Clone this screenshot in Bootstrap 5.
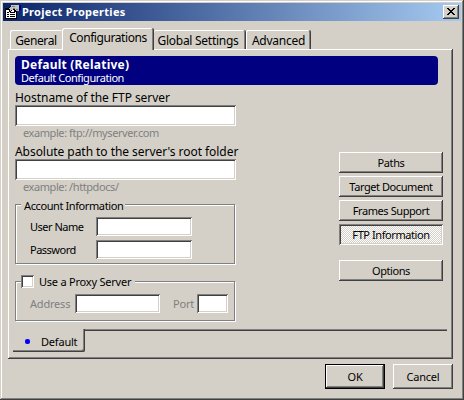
<!DOCTYPE html>
<html lang="en">
<head>
<meta charset="utf-8">
<meta name="viewport" content="width=device-width, initial-scale=1">
<title>Project Properties</title>
<link rel="stylesheet" href="https://cdn.jsdelivr.net/npm/bootstrap@5.3.0/dist/css/bootstrap.min.css">
<style>
:root{--face:#d4d0c8;--shade:#808080;--dark:#404040}
body{margin:0;background:var(--face);font:11px/14px "Noto Sans",sans-serif;letter-spacing:-.2px;color:#000;overflow:hidden}
button{letter-spacing:inherit}
.dialog{width:464px;height:400px;padding:3px 3px 0;background:var(--face);white-space:nowrap;
 box-shadow:inset -1px -1px var(--dark),inset 1px 1px var(--face),inset -2px -2px var(--shade),inset 2px 2px #fff}
.titlebar{height:18px;width:458px;background:linear-gradient(90deg,#0a246a,#a6caf0);color:#fff;padding:0 2px}
.titlebar h1{font-size:11px;line-height:18px;font-weight:700;margin:0 auto 0 1px;letter-spacing:.28px}
.raised{background:var(--face);border:0;border-radius:0;padding:0;color:#000;font:inherit;text-align:center;
 box-shadow:inset -1px -1px var(--dark),inset 1px 1px #fff,inset -2px -2px var(--shade)}
.close-x{width:16px;height:14px}
.tabs{height:21px;margin:7px 0 0 7px}
.tab-top{height:19px;border:0;border-radius:2px 2px 0 0;background:var(--face);padding:3px 0 0;font-size:12px;color:#000;
 line-height:14px;text-align:center;box-shadow:inset -1px 0 var(--dark),inset 1px 1px #fff,inset -2px 0 var(--shade)}
.tab-top.current{height:22px;margin-bottom:-1px;position:relative;padding:0 0 3px}
.t1{width:52px;box-shadow:inset 1px 1px #fff;letter-spacing:-.4px}
.t2{width:92px;letter-spacing:-.42px}
.t3{width:92px;padding-right:4px;letter-spacing:-.27px;box-shadow:inset -1px 0 var(--dark),inset 0 1px #fff,inset -2px 0 var(--shade)}
.t4{width:65px;letter-spacing:-.25px}
.sheet{width:445px;height:310px;margin-left:5px;padding:7px 0 0 7px;
 box-shadow:inset -1px -1px var(--dark),inset 1px 1px #fff,inset -2px -2px var(--shade)}
.banner{width:423px;height:29px;border-radius:4px;background:#000080;color:#fff;padding:2px 0 0 6px}
.banner h2{font-size:12px;line-height:14px;font-weight:700;margin:0;letter-spacing:.22px}
.banner p{line-height:11px;margin:0;letter-spacing:-.43px}
.left{width:221px;padding-top:6px}
.cap{font-size:12px;line-height:14px;display:block;letter-spacing:-.05px}
.sunk{background:#fff;border:0;border-radius:0;padding:0;display:block;height:21px;
 box-shadow:inset 1px 1px var(--shade),inset -1px -1px #fff,inset 2px 2px var(--dark),inset -2px -2px var(--face)}
.hint{color:var(--shade);padding-left:8px;height:14px;margin-bottom:5px;letter-spacing:-.42px}
.etched{border:1px solid var(--shade);box-shadow:1px 1px #fff,inset 1px 1px #fff;width:220px}
.account{height:60px;margin-top:10px}
.proxy{height:40px;margin-top:17px}
.heading{background:var(--face);width:fit-content;margin:-6px 0 4px 5px;padding:0 2px;letter-spacing:-.22px}
.account .heading{letter-spacing:-.4px;padding-left:3px}
.proxy .heading{margin:-7px 0 6px 5px;padding:0 4px 0 0;height:13px}
.check{width:13px;height:13px;margin-right:5px;appearance:none}
.field-row{padding-left:14px;margin-bottom:4px;height:19px}
.field-row .sunk{height:19px}
.account .sunk{width:96px}
.account label{width:66px;letter-spacing:-.5px}
.muted{color:var(--shade)}
.addr-label{width:45px}.addr{width:85px}.port-label{width:37px;padding-left:13px}.port{width:31px}
.side{width:104px;margin-left:103px;padding-top:67px;letter-spacing:-.42px}
.side .raised{height:21px;margin-bottom:3px;line-height:20px;letter-spacing:inherit}
.side .pressed{background:repeating-conic-gradient(#fff 0 25%,#d4d0c8 0 50%) 0 0/2px 2px;line-height:22px;
 box-shadow:inset 1px 1px var(--shade),inset -1px -1px #fff,inset 2px 2px var(--dark),inset -2px -2px var(--face)}
.side .apart{margin-top:12px}
.foot{margin:8px 0 0 -2px;width:434px}
.foot-tab{width:72px;height:23px;padding:6px 0 0 12px;border-radius:0 0 2px 0;
 box-shadow:inset -1px -1px var(--dark),inset -2px -2px var(--shade)}
.foot-line{height:2px;background:linear-gradient(var(--shade) 50%,var(--dark) 50%)}
.dot{width:5px;height:5px;border-radius:2px;background:#00f;margin:4px 11px 0 0}
.actions{padding:5px 8px 0 0;gap:8px}
.actions .raised{width:60px;height:25px;line-height:24px}
.actions .ok{border:1px solid #000;line-height:22px}
</style>
</head>
<body>
<main class="dialog">
 <header class="titlebar d-flex align-items-center">
  <svg width="16" height="16" viewBox="0 0 16 16" shape-rendering="crispEdges" aria-hidden="true">
   <path d="M0 4h12v11H0z" fill="#000"/><path d="M1 6h10v8H1z" fill="#fff"/>
   <path d="M2 8h2v1H2zM5 8h5v1H5zM2 10h2v1H2zM5 10h5v1H5zM2 12h2v1H2zM5 12h5v1H5z" fill="#000"/>
   <path d="M3 6V4h1V3h1V2h1V1h8v6h-3v1H9V6H7L5 8H4V6z" fill="#000"/>
   <path d="M6 1h8v6h-3V6h-1V5H8v1H6v1H5V5H4V4h1V3h1z" fill="#c4c2be"/><path d="M7 2h3v1H7zM8 4h2v1H8zM11 5h2v1h-2z" fill="#808080"/><path d="M14 1h2v5h-1v1h-1z" fill="#000080"/>
  </svg>
  <h1>Project Properties</h1>
  <button class="raised close-x d-flex" aria-label="Close"><svg width="16" height="14" viewBox="0 0 16 14" shape-rendering="crispEdges"><path d="M4 3h2v1h1v1h2V4h1V3h2v1h-1v1h-1v1H9v1h1v1h1v1h1v1h-2V9H9V8H7v1H6v1H4V9h1V8h1V7h1V6H6V5H5V4H4z" fill="#000"/></svg></button>
 </header>
 <nav class="tabs d-flex align-items-end">
  <button class="tab-top t1">General</button>
  <button class="tab-top current t2">Configurations</button>
  <button class="tab-top t3">Global Settings</button>
  <button class="tab-top t4">Advanced</button>
 </nav>
 <section class="sheet">
  <div class="banner"><h2>Default (Relative)</h2><p>Default Configuration</p></div>
  <div class="d-flex">
   <div class="left">
    <label class="cap" for="host">Hostname of the FTP server</label>
    <input class="sunk w-100" id="host">
    <div class="hint">example: ftp://myserver.com</div>
    <label class="cap" for="root">Absolute path to the server's root folder</label>
    <input class="sunk w-100" id="root">
    <div class="hint mb-0">example: /httpdocs/</div>
    <div class="etched account">
     <div class="heading">Account Information</div>
     <div class="field-row d-flex align-items-center"><label for="user">User Name</label><input class="sunk" id="user"></div>
     <div class="field-row d-flex align-items-center"><label for="pass">Password</label><input class="sunk" id="pass" type="password"></div>
    </div>
    <div class="etched proxy">
     <div class="heading d-flex"><input class="sunk check" type="checkbox" id="useproxy"><label for="useproxy">Use a Proxy Server</label></div>
     <div class="field-row d-flex align-items-center muted">
      <label class="addr-label" for="addr">Address</label><input class="sunk addr" id="addr">
      <label class="port-label" for="port">Port</label><input class="sunk port" id="port">
     </div>
    </div>
   </div>
   <div class="side d-flex flex-column">
    <button class="raised">Paths</button>
    <button class="raised">Target Document</button>
    <button class="raised">Frames Support</button>
    <button class="raised pressed">FTP Information</button>
    <button class="raised apart">Options</button>
   </div>
  </div>
  <div class="foot d-flex">
   <div class="foot-tab d-flex"><span class="dot"></span><span>Default</span></div>
   <div class="foot-line flex-grow-1"></div>
  </div>
 </section>
 <footer class="actions d-flex justify-content-end">
  <button class="raised ok">OK</button>
  <button class="raised">Cancel</button>
 </footer>
</main>
<script src="https://cdn.jsdelivr.net/npm/bootstrap@5.3.0/dist/js/bootstrap.bundle.min.js"></script>
</body>
</html>
